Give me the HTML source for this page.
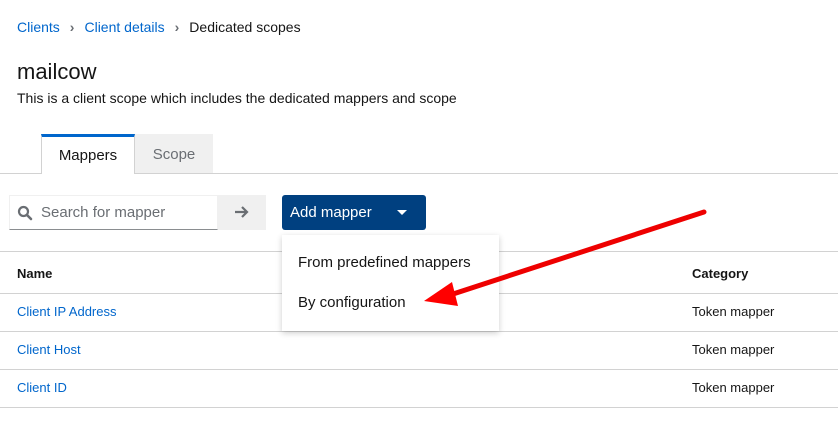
<!DOCTYPE html><html><head><style>
body{margin:0;width:838px;height:430px;background:#fff;font-family:"Liberation Sans",sans-serif;position:relative;overflow:hidden;color:#151515}
.a{position:absolute;white-space:nowrap}
.l{color:#0066cc}
.hr{position:absolute;left:0;width:838px;height:1px;background:#d2d2d2}
</style></head><body>
<div class="a" style="left:17px;top:19px;font-size:14px"><span class="l">Clients</span><span style="color:#6a6e73;margin:0 10px;font-weight:bold">›</span><span class="l">Client details</span><span style="color:#6a6e73;margin:0 10px;font-weight:bold">›</span>Dedicated scopes</div>
<div class="a" style="left:17px;top:59px;font-size:22px">mailcow</div>
<div class="a" style="left:17px;top:90px;font-size:14px">This is a client scope which includes the dedicated mappers and scope</div>
<div class="hr" style="top:173px"></div>
<div class="a" style="left:41px;top:134px;width:94px;border:1px solid #d2d2d2;border-top:3px solid #06c;border-bottom:none;background:#fff;box-sizing:border-box;text-align:center;line-height:38px;font-size:15px;color:#151515;height:40px">Mappers</div>
<div class="a" style="left:135px;top:134px;width:78px;height:39px;background:#f0f0f0;text-align:center;line-height:42px;font-size:15px;color:#6a6e73">Scope</div>
<div class="a" style="left:9px;top:195px;width:209px;height:35px;border:1px solid #f0f0f0;border-bottom:1px solid #8a8d90;box-sizing:border-box"></div>
<svg class="a" style="left:17px;top:205px" width="16" height="16" viewBox="0 0 16 16"><circle cx="6.5" cy="6.5" r="4.5" fill="none" stroke="#6a6e73" stroke-width="2.2"/><path d="M10 10l4 4" stroke="#6a6e73" stroke-width="2.6" stroke-linecap="round"/></svg>
<div class="a" style="left:41px;top:204px;font-size:15px;color:#6a6e73">Search for mapper</div>
<div class="a" style="left:218px;top:195px;width:48px;height:35px;background:#f0f0f0"></div>
<svg class="a" style="left:234px;top:205px" width="16" height="14" viewBox="0 0 16 14"><path d="M1 7h12M8 2l5 5-5 5" fill="none" stroke="#6a6e73" stroke-width="2.2"/></svg>
<div class="a" style="left:282px;top:195px;width:144px;height:35px;background:#004080;border-radius:3px;color:#fff;font-size:15px;line-height:35px;padding-left:8px;box-sizing:border-box">Add mapper</div>
<div class="a" style="left:397px;top:210px;border-left:5px solid transparent;border-right:5px solid transparent;border-top:5px solid #fff"></div>
<div class="hr" style="top:251px"></div>
<div class="a" style="left:17px;top:266px;font-size:13px;font-weight:bold">Name</div>
<div class="a" style="left:692px;top:266px;font-size:13px;font-weight:bold">Category</div>
<div class="hr" style="top:293px"></div>
<div class="a l" style="left:17px;top:304px;font-size:13px">Client IP Address</div>
<div class="a" style="left:692px;top:304px;font-size:13px">Token mapper</div>
<div class="hr" style="top:331px"></div>
<div class="a l" style="left:17px;top:342px;font-size:13px">Client Host</div>
<div class="a" style="left:692px;top:342px;font-size:13px">Token mapper</div>
<div class="hr" style="top:369px"></div>
<div class="a l" style="left:17px;top:380px;font-size:13px">Client ID</div>
<div class="a" style="left:692px;top:380px;font-size:13px">Token mapper</div>
<div class="hr" style="top:407px"></div>
<div class="a" style="left:282px;top:235px;width:217px;height:96px;background:#fff;box-shadow:0 2px 6px rgba(0,0,0,.2)"></div>
<div class="a" style="left:298px;top:254px;font-size:15px">From predefined mappers</div>
<div class="a" style="left:298px;top:294px;font-size:15px">By configuration</div>
<svg class="a" style="left:0;top:0" width="838" height="430"><path d="M704 212L450 295" stroke="#e00" stroke-width="5" stroke-linecap="round"/><path d="M424 301L452 282L458 306Z" fill="#f00"/></svg>
</body></html>
